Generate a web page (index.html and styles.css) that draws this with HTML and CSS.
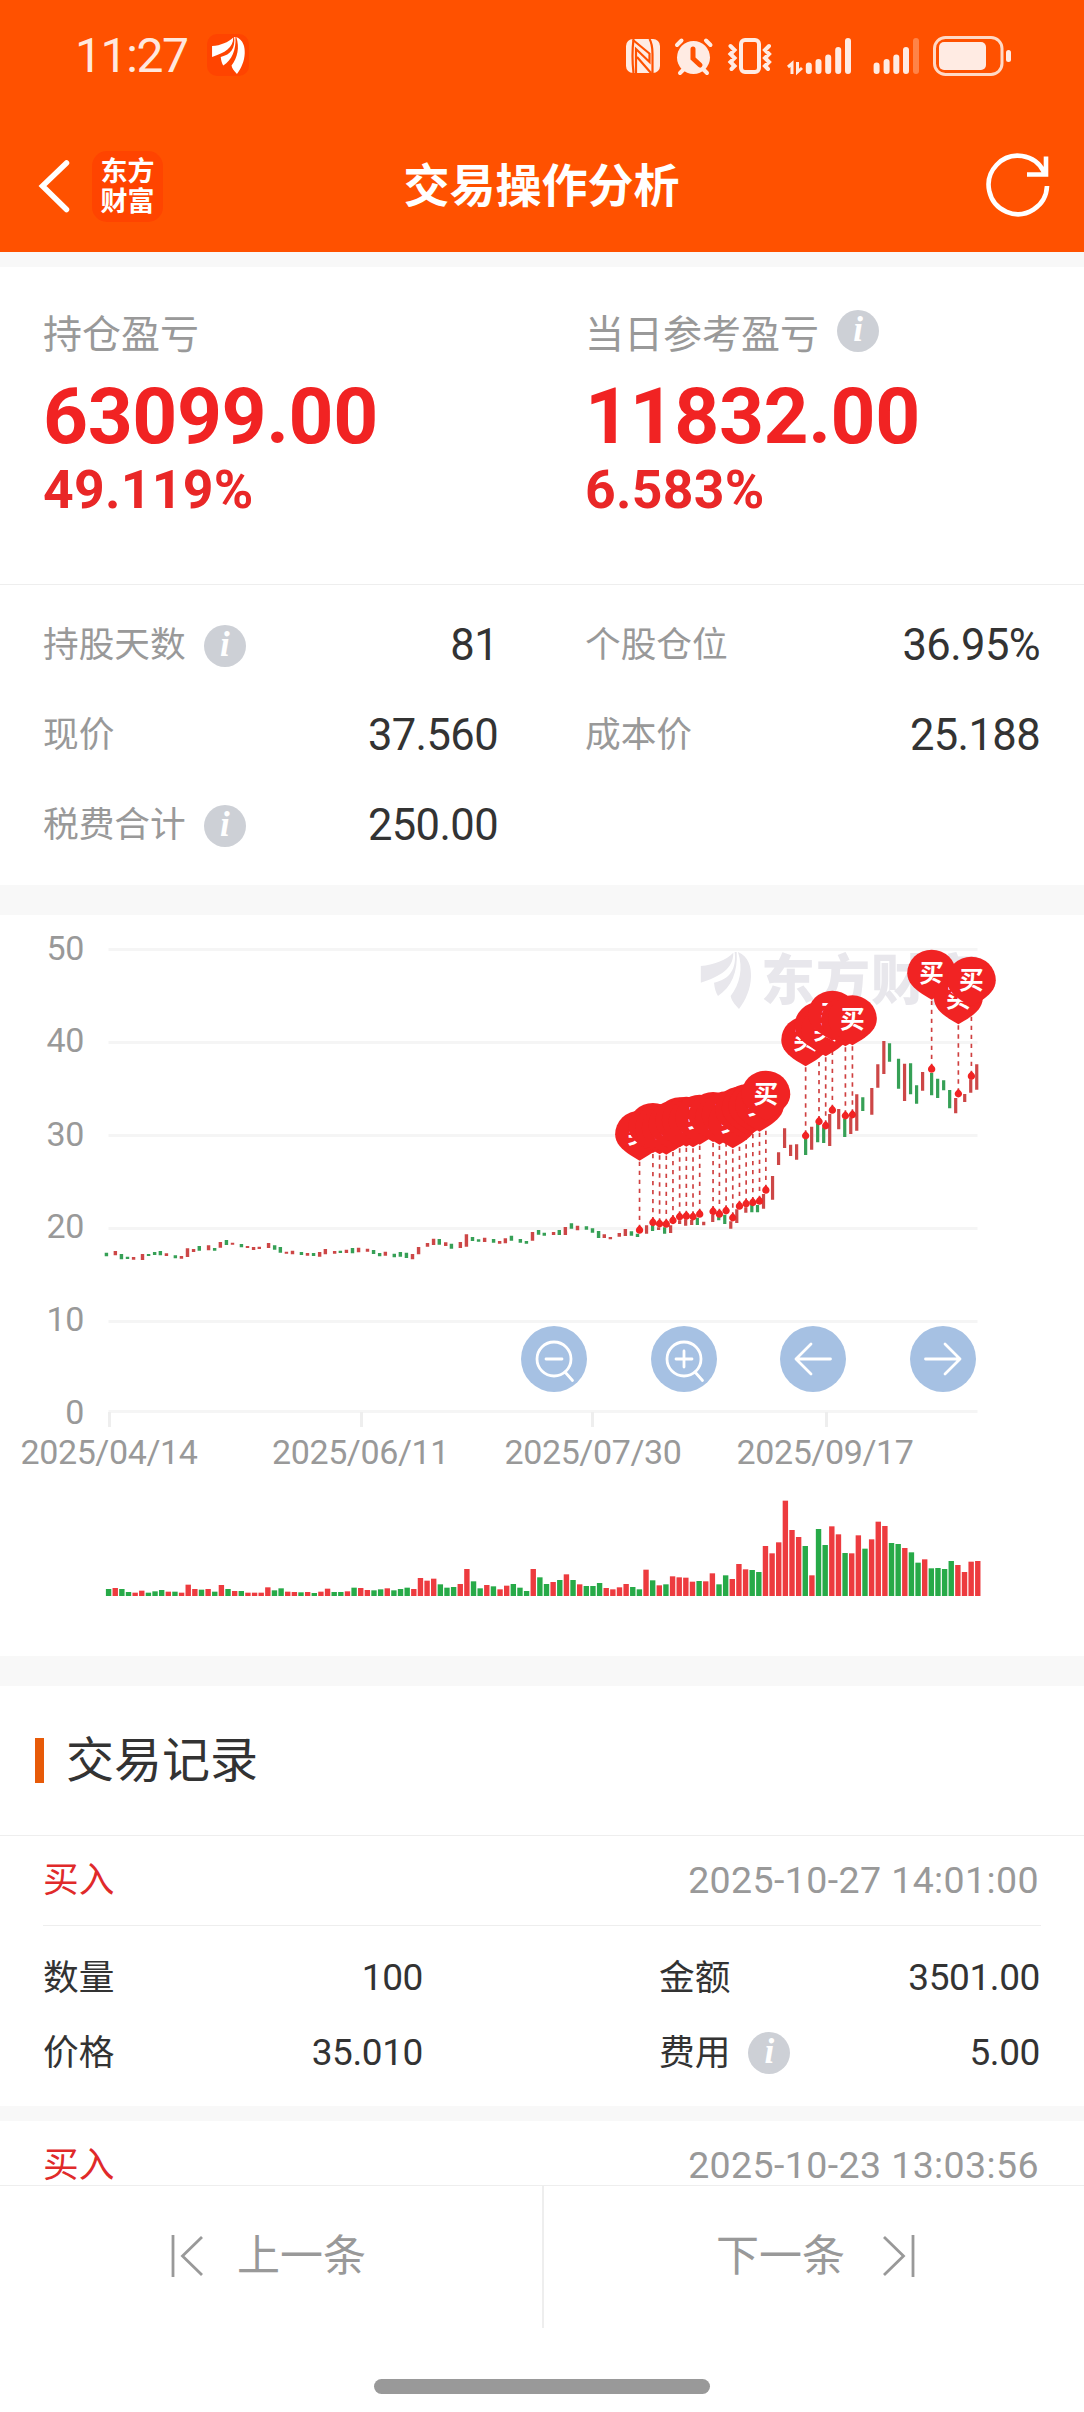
FILE: index.html
```html
<!DOCTYPE html>
<html lang="zh-CN">
<head>
<meta charset="utf-8">
<title>交易操作分析</title>
<link rel="stylesheet" href="styles.css">
</head>
<body>
<svg class="defs" width="0" height="0">
  <symbol id="wing" viewBox="0 0 152 171">
    <path d="M0 42C40 38 75 25 98 2C98 50 60 72 0 92Z"/>
    <path d="M102 0C108 50 88 82 40 92C42 110 46 122 52 132C92 105 112 60 108 0Z"/>
    <path d="M112 0C145 15 152 45 151 75C150 110 135 145 115 171C100 155 92 145 90 132C118 95 128 50 112 0Z"/>
  </symbol>
</svg>
<div class="page">
  <header class="top">
    <div class="status">
      <span class="clock">11:27</span>
      <span class="app-badge"><svg width="33" height="37"><use href="#wing"/></svg></span>
      <svg class="status-icons" width="388" height="42" viewBox="625 35 388 42">
        <rect x="626" y="39" width="34" height="34" rx="7"/>
        <g class="cut">
          <path d="M633.500 39Q631.500 56 633.500 73M649.500 39Q652.500 44 652.500 54"/>
          <path d="M633 40L650 54M636 73V49L649.500 62V53M637 57L651 73M652.500 54V73"/>
        </g>
        <circle cx="693.500" cy="57.500" r="16.500"/>
        <path class="line" d="M677 45L681.500 40.500M710.500 45L706 40.500M684 69L680 73M703 69L707 73"/>
        <path class="cut thick" d="M693 49V58.500L700 65"/>
        <path class="line" d="M730.500 46l4 4l-4 4l4 4l-4 4l4 4l-3 3M769 46l-4 4l4 4l-4 4l4 4l-4 4l3 3"/>
        <rect class="line" x="741" y="40" width="18" height="32" rx="4"/>
        <path class="thin" d="M788 67l4-3.500V74M797.500 62V72l4.500-4"/>
        <path class="bar" d="M808.800 65.500V71M818.500 62V71M828.200 57.500V71M838.200 50V71M848 41V71M876.600 65.500V71M886.600 62V71M896.300 57.500V71M906 50V71"/>
        <path class="bar faded" d="M916 41V71"/>
        <rect class="shell" x="934.500" y="37.500" width="67.500" height="37" rx="11"/>
        <rect x="939" y="42" width="47" height="28" rx="5"/>
        <rect x="1006" y="50" width="5" height="12" rx="2.500"/>
      </svg>
    </div>
    <nav class="nav">
      <svg class="back" width="32" height="56" viewBox="38 159 32 56"><path d="M66.500 164L42.500 187L66.500 210.500"/></svg>
      <span class="brand">东方<br>财富</span>
      <h1>交易操作分析</h1>
      <svg class="refresh" width="64" height="66" viewBox="986 153 64 66"><path d="M1047 186A29.200 29.200 0 1 1 1044 172M1046 156.500V174.500H1027"/></svg>
    </nav>
  </header>

  <section class="summary">
    <div class="half">
      <div class="caption">持仓盈亏</div>
      <div class="big">63099.00</div>
      <div class="pct">49.119%</div>
    </div>
    <div class="half">
      <div class="caption">当日参考盈亏<i class="info">i</i></div>
      <div class="big">11832.00</div>
      <div class="pct">6.583%</div>
    </div>
  </section>

  <section class="metrics">
    <div class="metric"><span>持股天数<i class="info">i</i></span><b>81</b></div>
    <div class="metric"><span>个股仓位</span><b>36.95%</b></div>
    <div class="metric"><span>现价</span><b>37.560</b></div>
    <div class="metric"><span>成本价</span><b>25.188</b></div>
    <div class="metric"><span>税费合计<i class="info">i</i></span><b>250.00</b></div>
  </section>

  <section class="chart">
    <svg width="1084" height="741" viewBox="0 915 1084 741">
      <path class="grid" d="M108.500 949.500H977.500M108.500 1042.500H977.500M108.500 1135.500H977.500M108.500 1228.500H977.500M108.500 1321.500H977.500M108.500 1411.500H977.500"/>
      <path class="tick" d="M109.500 1412V1427M361.500 1412V1427M592.500 1412V1427M826.500 1412V1427"/>
      <g class="axis end">
        <text x="84" y="960">50</text><text x="84" y="1052">40</text><text x="84" y="1145.500">30</text>
        <text x="84" y="1238">20</text><text x="84" y="1331">10</text><text x="84" y="1424">0</text>
      </g>
      <g class="axis mid">
        <text x="109" y="1464">2025/04/14</text><text x="360.500" y="1464">2025/06/11</text>
        <text x="593" y="1464">2025/07/30</text><text x="825" y="1464">2025/09/17</text>
      </g>
      <g class="watermark">
        <use href="#wing" x="700.500" y="952" width="51" height="57"/>
        <text x="761" y="1000" textLength="219">东方财富</text>
      </g>
      <g transform="translate(80 1160) scale(.35714 .33333)">
        <path class="candle up" d="M99 273V286M150 291V299M175 282V300M242 280V288M284 288V296M301 265V291M318 267V276M360 256V271M393 246V263M427 248V254M469 258V264M486 261V270M502 260V267M528 249V264M578 275V281M595 272V283M637 279V287M671 276V290M687 267V283M713 273V281M746 269V279M780 263V277M805 266V275M855 275V287M931 282V298M948 261V283M973 249V260M990 236V255M1024 247V258M1065 246V264M1082 223V260M1133 233V246M1175 243V251M1191 235V250M1267 216V242M1326 216V225M1359 201V225M1393 197V211M1468 223V234M1485 231V238M1510 219V230M1527 207V228"/>
        <path class="candle down" d="M74 278V289M116 282V298M133 290V297M192 282V288M209 276V285M225 273V286M267 286V295M334 258V272M377 264V272M410 240V255M452 252V262M545 256V269M561 261V278M620 276V285M654 279V288M729 272V279M763 264V280M822 270V282M839 279V289M880 281V292M897 276V290M914 278V294M1006 237V254M1040 251V266M1099 231V243M1116 238V245M1158 237V248M1208 227V242M1233 237V248M1250 243V251M1284 210V224M1300 218V227M1342 210V225M1376 190V206M1418 199V209M1435 205V218M1452 213V234M1544 214V227M1561 221V231"/>
      </g>
      <g transform="translate(560 920) scale(.3342 .33333)">
        <path class="candle up" d="M259 916V941M295 922V930M331 916V939M358 901V912M376 898V917M394 900V915M430 905V916M457 884V906M511 904V926M529 868V909M556 862V878M609 822V866M636 768V839M654 697V735M672 625V684M690 674V708M708 673V719M753 620V689M807 582V678M834 567V628M870 592V642M888 523V632M933 504V584M951 433V503M969 363V462M1031 431V543M1085 456V512M1184 534V580M1211 522V546M1229 478V518M1247 433V509"/>
        <path class="candle down" d="M277 915V933M313 922V941M411 893V915M475 890V901M493 884V912M574 855V877M591 855V877M735 655V705M771 612V667M789 622V669M852 596V651M906 532V573M986 370V425M1013 416V506M1049 430V523M1067 496V551M1112 459V526M1130 476V534M1148 481V511M1166 510V565"/>
        <g id="stems"></g>
        <g id="pins"></g>
      </g>
      <g id="volume"></g>
    </svg>
    <div class="tools">
      <svg viewBox="-33 -33 66 66"><circle r="17"/><path d="M-8 0H8M11 13L18.500 21.500"/></svg>
      <svg viewBox="-33 -33 66 66"><circle r="17"/><path d="M-8 0H8M0-8V8M11 13L18.500 21.500"/></svg>
      <svg viewBox="-33 -33 66 66"><path d="M17.500 0H-17M-2-15L-17 0L-2 15"/></svg>
      <svg viewBox="-33 -33 66 66"><path d="M-17.500 0H17M2-15L17 0L2 15"/></svg>
    </div>
  </section>

  <section class="records">
    <h2>交易记录</h2>
    <article>
      <div class="head"><span>买入</span><time>2025-10-27 14:01:00</time></div>
      <div class="body">
        <div><span>数量</span><span>100</span></div>
        <div><span>金额</span><span>3501.00</span></div>
        <div><span>价格</span><span>35.010</span></div>
        <div><span>费用<i class="info">i</i></span><span>5.00</span></div>
      </div>
    </article>
    <article>
      <div class="head"><span>买入</span><time>2025-10-23 13:03:56</time></div>
    </article>
  </section>

  <footer>
    <div class="pager">
      <div><svg width="34" height="44"><path d="M2 1V43M31 3L11.500 22L31 41"/></svg><span>上一条</span></div>
      <div><span>下一条</span><svg width="34" height="44"><path d="M32 1V43M3 3L22.500 22L3 41"/></svg></div>
    </div>
    <div class="home"></div>
  </footer>
</div>
<script src="chart.js"></script>
</body>
</html>
```
FILE: styles.css
```css
* { box-sizing: border-box; }
body {
  margin: 0;
  font-family: Roboto, "Noto Sans CJK SC", sans-serif;
  color: #333;
  background: #f8f8f8;
}
.defs { position: absolute; }
.page {
  width: 1084px;
  height: 2412px;
  display: flex;
  flex-direction: column;
  overflow: hidden;
}
h1, h2 { margin: 0; }
svg { display: block; flex: none; }

.top {
  height: 252px;
  background: #ff5100;
  color: #fff;
  flex: none;
}
.status {
  height: 112px;
  padding: 0 71px 0 75px;
  display: flex;
  align-items: center;
}
.clock {
  font-size: 48px;
  line-height: 50px;
  color: #ffe8de;
  letter-spacing: -1.4px;
  width: 132px;
}
.app-badge {
  width: 42px;
  height: 42px;
  margin-top: -2px;
  border-radius: 10px;
  background: #ff4400;
  display: flex;
  align-items: center;
  justify-content: center;
  fill: #fff;
}
.status-icons { margin-left: auto; fill: #ffebe3; }
.status-icons .line { fill: none; stroke: #ffebe3; stroke-width: 4; stroke-linecap: round; }
.status-icons .thin { fill: none; stroke: #ffebe3; stroke-width: 3; }
.status-icons .bar { fill: none; stroke: #ffebe3; stroke-width: 6; stroke-linecap: round; }
.status-icons .faded { stroke: #ff8347; }
.status-icons .shell { fill: none; stroke: #ffd9c6; stroke-width: 3; }
.status-icons .cut { fill: none; stroke: #ff5100; stroke-width: 2.2; }
.status-icons .thick { stroke-width: 5; stroke-linecap: round; }

.nav {
  height: 140px;
  padding: 0 34px 0 38px;
  display: grid;
  grid-template-columns: 54px 71px 1fr 130px;
  align-items: center;
}
.nav svg { fill: none; stroke: #fff; margin-top: 8px; }
.back { stroke-width: 5.5; stroke-linecap: round; }
.brand {
  width: 71px;
  height: 71px;
  margin-top: 8px;
  padding-top: 6px;
  border-radius: 15px;
  background: #ff4400;
  font-size: 27px;
  font-weight: 700;
  line-height: 30px;
  text-align: center;
}
.nav h1 {
  font-size: 46px;
  line-height: 60px;
  margin-top: 8px;
  text-align: center;
}
.refresh { justify-self: end; stroke-width: 4.6; }

.summary {
  margin-top: 15px;
  height: 318px;
  padding-top: 43px;
  background: #fff;
  border-bottom: 1px solid #eee;
  display: grid;
  grid-template-columns: 1fr 1fr;
  flex: none;
}
.half { padding-left: 43px; }
.caption {
  display: flex;
  align-items: center;
  font-size: 39px;
  line-height: 50px;
  color: #999;
}
.big {
  margin: 17px 0 8px;
  font-size: 78.500px;
  font-weight: 700;
  line-height: 78px;
  letter-spacing: -0.4px;
  color: #f12323;
}
.pct {
  font-size: 53.500px;
  font-weight: 700;
  line-height: 54px;
  letter-spacing: 0.3px;
  color: #e92727;
}
.info {
  width: 42px;
  height: 42px;
  margin-left: 18px;
  border-radius: 50%;
  background: #cdd0d6;
  color: #fff;
  font: italic 700 35px/40px "Liberation Serif", serif;
  text-align: center;
}
.caption .info { margin: -8px 0 0 18px; }

.metrics {
  height: 300px;
  padding: 15px 0;
  background: #fff;
  display: grid;
  grid-template-columns: 1fr 1fr;
  grid-auto-rows: 90px;
  flex: none;
}
.metric {
  padding: 0 44px 0 43px;
  display: flex;
  align-items: center;
  justify-content: space-between;
}
.metric span {
  display: flex;
  align-items: center;
  font-size: 35.700px;
  line-height: 50px;
  color: #999;
}
.metric .info { margin-top: 2px; }
.metric b {
  padding-top: 2px;
  font-size: 43.500px;
  font-weight: 400;
  line-height: 50px;
  letter-spacing: -0.6px;
}

.chart {
  position: relative;
  margin: 30px 0;
  height: 741px;
  background: #fff;
  flex: none;
}
.grid { stroke: #f5f5f5; stroke-width: 3; }
.tick { stroke: #eee; stroke-width: 3; }
.axis { font-size: 34px; fill: #999; letter-spacing: -0.4px; }
.end { text-anchor: end; }
.mid { text-anchor: middle; }
.watermark { fill: #e8e7ec; font-size: 54px; font-weight: 900; }
.candle { fill: none; stroke-width: 9.6; }
.candle.up { stroke: #cd4747; }
.candle.down { stroke: #36a056; }
.stem { stroke: #cf4040; stroke-width: 5; stroke-dasharray: 13 14; }
.pin { fill: #f12323; }
.pin-label { fill: #fff; font-size: 74px; font-weight: 700; text-anchor: middle; }
.vol-up { fill: #ed3b3f; }
.vol-down { fill: #27aa48; }
.tools {
  position: absolute;
  left: 521px;
  top: 411px;
  width: 455px;
  display: flex;
  justify-content: space-between;
}
.tools svg {
  width: 66px;
  height: 66px;
  border-radius: 50%;
  background: #a6c1e3;
  fill: none;
  stroke: #fff;
  stroke-width: 2.8;
  stroke-linecap: round;
  stroke-linejoin: round;
}

.records { background: #fff; flex: 1; overflow: hidden; min-height: 0; }
.records h2 {
  height: 150px;
  padding: 0 0 0 35px;
  border-bottom: 1px solid #eee;
  display: flex;
  align-items: center;
  font-size: 48px;
  line-height: 50px;
  font-weight: 400;
}
.records h2::before {
  content: "";
  width: 9px;
  height: 45px;
  margin-right: 22px;
  background: #e75a08;
}
article { border-bottom: 15px solid #f8f8f8; }
.head {
  height: 90px;
  margin: 0 43px;
  padding: 0 2px 2px 0;
  border-bottom: 1px solid #eee;
  display: flex;
  align-items: center;
  justify-content: space-between;
  font-size: 35.700px;
  line-height: 44px;
  color: #e02a2a;
}
.head time { font-size: 37.500px; letter-spacing: 0.4px; color: #999; }
.body {
  padding: 14px 44px 16px 43px;
  display: grid;
  grid-template-columns: 380px 381px;
  grid-auto-rows: 75px;
  justify-content: space-between;
}
.body div, .body span { display: flex; align-items: center; }
.body div { justify-content: space-between; font-size: 35.700px; line-height: 44px; }
.body div > span:last-child { font-size: 37px; letter-spacing: -0.4px; }

footer {
  height: 227px;
  background: #fff;
  border-top: 1px solid #eee;
  flex: none;
}
.pager {
  height: 142px;
  display: grid;
  grid-template-columns: 1fr 1fr;
  font-size: 43px;
  line-height: 44px;
  color: #999;
}
.pager div { display: flex; gap: 32px; padding: 0 0 2px 171px; align-items: center; }
.pager div + div { gap: 36px; padding-left: 172px; border-left: 2px solid #eee; }
.pager svg { fill: none; stroke: #999; stroke-width: 2.800; }
.home {
  width: 336px;
  height: 15px;
  margin: 51px auto 0;
  border-radius: 8px;
  background: #999;
}
```
FILE: chart.js
```js
const NS = "http://www.w3.org/2000/svg";

function add(parent, name, attrs, text) {
  const el = document.createElementNS(NS, name);
  for (const key in attrs) el.setAttribute(key, attrs[key]);
  if (text) el.textContent = text;
  parent.appendChild(el);
  return el;
}

// Buy points: [x, y] in the price group's own units.
const buys = [
  [238, 930], [278, 907], [298, 911], [318, 912], [338, 901], [358, 890], [378, 888],
  [398, 890], [418, 882], [458, 874], [477, 882], [497, 872], [517, 893], [537, 858],
  [557, 851], [577, 847], [597, 843], [616, 810], [735, 647], [775, 604], [795, 617],
  [815, 570], [854, 587], [875, 584], [1112, 447], [1192, 521], [1231, 468]
];
const STEM = 208;
const stems = document.getElementById("stems");
const pins = document.getElementById("pins");

for (const [x, y] of buys) {
  add(stems, "path", { class: "stem", d: `M${x} ${y - STEM + 3}V${y}` });
  add(stems, "path", { class: "pin", d: `M${x} ${y - 15}l7 7a11 11 0 1 1 -14 0z` });
  const pin = add(pins, "g", { transform: `translate(${x} ${y - STEM})` });
  add(pin, "path", {
    class: "pin",
    d: "M0 0L-28 -17C-52 -32 -73 -52 -73 -79A73 71 0 0 1 73 -79C73 -52 52 -32 28 -17Z"
  });
  add(pin, "text", { class: "pin-label", y: -53 }, "买");
}

// Daily volume, negative on falling days.
const volume = [
  -21, 24, -21, -12, 10, 16, -10, -14, -18, 13, -13, 10, 34, 21, -19, 21, -13, 33, -21, 15,
  -15, 10, 10, 10, 26, -17, -23, 13, 12, -11, 12, -9, 13, 22, -12, -12, 14, -25, 24, 18,
  -17, -20, 23, -17, -21, -25, 21, 54, 46, 52, -35, -25, -27, 36, 81, -44, -23, 33, -29, 20,
  31, -36, -25, -15, 81, -56, -36, 42, -48, 65, -48, 35, -30, -30, -39, 24, 20, 26, 36, -27,
  -20, 79, -47, 32, -35, 59, 56, 55, 43, -45, 44, 68, -35, -62, 51, 96, 80, -78, -72, 150,
  128, 161, 286, 198, 177, -150, 62, -201, -153, 209, 185, -129, 128, 182, -142, 170, 223, 210, -159, -156,
  144, -131, -100, 110, -83, -84, -81, -105, 93, 72, 103, 105
];
const volumeGroup = document.getElementById("volume");

volume.forEach((v, i) => {
  const h = Math.abs(v) / 3;
  add(volumeGroup, "rect", {
    class: v > 0 ? "vol-up" : "vol-down",
    x: (105.9 + i * 6.635).toFixed(2),
    y: (1596 - h).toFixed(2),
    width: 5.4,
    height: h.toFixed(2)
  });
});
```
